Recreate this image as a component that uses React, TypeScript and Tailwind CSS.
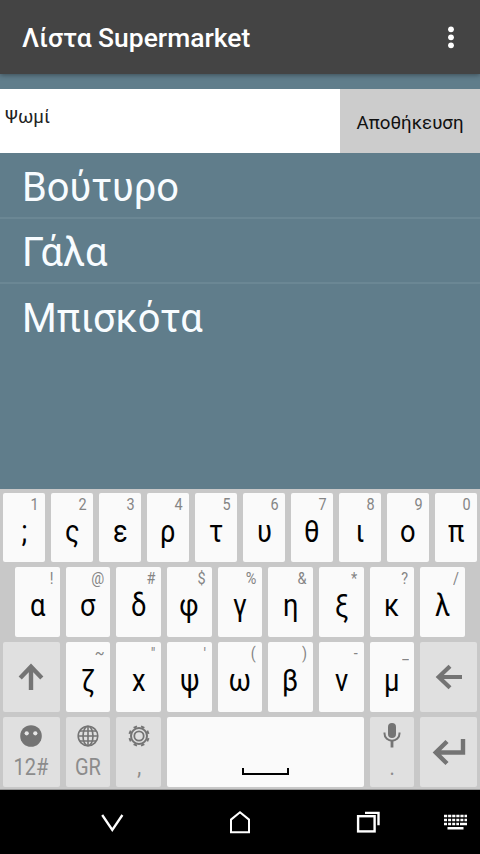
import type { ReactNode } from 'react';

type KeyDef = [label: string, hint: string];

const ROW_ONE: KeyDef[] = [
  [';', '1'], ['ς', '2'], ['ε', '3'], ['ρ', '4'], ['τ', '5'],
  ['υ', '6'], ['θ', '7'], ['ι', '8'], ['ο', '9'], ['π', '0'],
];
const ROW_TWO: KeyDef[] = [
  ['α', '!'], ['σ', '@'], ['δ', '#'], ['φ', '$'], ['γ', '%'],
  ['η', '&'], ['ξ', '*'], ['κ', '?'], ['λ', '/'],
];
const ROW_THREE: KeyDef[] = [
  ['ζ', '~'], ['x', '"'], ['ψ', "'"], ['ω', '('], ['β', ')'], ['ν', '-'], ['μ', '_'],
];

function LetterKey({ label, hint }: { label: string; hint: string }) {
  return (
    <div className="flex h-full min-w-0 flex-1 flex-col rounded-[2px] bg-[#fafafa]">
      <div className="h-[22px] pr-[6px] text-right text-[17px] leading-[22px] text-[#858585]">
        <span className="inline-block origin-right scale-x-[0.85]">{hint}</span>
      </div>
      <div className="text-center text-[31px] leading-[33px] text-black">
        <span className="inline-block scale-x-[0.88]">{label}</span>
      </div>
    </div>
  );
}

function FunctionKey({ className, children }: { className: string; children: ReactNode }) {
  return (
    <div className={`flex h-full shrink-0 flex-col items-center rounded-[2px] bg-[#e0e0e0] text-[#747474] ${className}`}>
      {children}
    </div>
  );
}

function Caption({ children }: { children: ReactNode }) {
  return (
    <div className="mt-[6px] text-[23px] leading-[28px] text-[#8c8c8c]">
      <span className="inline-block scale-x-[0.87]">{children}</span>
    </div>
  );
}

function Gear() {
  return (
    <svg className="h-[24px] w-[24px]" viewBox="-12 -12 24 24" fill="none" stroke="currentColor">
      <circle r="8" strokeWidth="2" />
      <circle r="4.7" strokeWidth="1.8" />
      {[22.5, 67.5, 112.5, 157.5, 202.5, 247.5, 292.5, 337.5].map((angle) => (
        <path key={angle} d="M-1.8 -9.6H1.8" strokeWidth="2" transform={`rotate(${angle})`} />
      ))}
    </svg>
  );
}

export default function App() {
  return (
    <div className="flex h-[854px] w-[480px] flex-col overflow-hidden bg-[#607d8b] font-['Roboto','Noto_Sans',sans-serif]">
      <header className="z-10 flex h-[74px] shrink-0 items-center justify-between bg-[#444444] pr-[26px] pl-[22px] shadow-[0_1px_5px_rgba(0,0,0,0.4)]">
        <h1 className="pt-[2px] text-[26px] leading-[32px] font-medium text-white">
          <span className="inline-block origin-left scale-x-[1.016]">Λίστα Supermarket</span>
        </h1>
        <svg className="h-[24px] w-[6px]" viewBox="0 0 6 24" fill="white">
          <circle cx="3" cy="4.3" r="2.9" />
          <circle cx="3" cy="12.3" r="2.9" />
          <circle cx="3" cy="20.3" r="2.9" />
        </svg>
      </header>

      <main className="flex min-h-0 flex-1 flex-col pt-[15.4px]">
        <div className="flex h-[64px] shrink-0">
          <div className="flex-1 bg-white pt-[17px] pl-[5px] text-[18.7px] leading-[22px] text-[#222]">Ψωμί</div>
          <div className="flex w-[140px] items-center justify-center bg-[#cccccc] pt-[3px] text-[18.7px] text-[#111]">Αποθήκευση</div>
        </div>
        <ul className="text-[39.8px] leading-[64px] text-[#f8fcff]">
          <li className="h-[66px] border-b-2 border-[#6b8794] pt-[3px] pl-[22px]">Βούτυρο</li>
          <li className="h-[65px] border-b-2 border-[#6b8794] pt-[2px] pl-[22px]">Γάλα</li>
          <li className="h-[65px] pt-[3px] pl-[22px]">Μπισκότα</li>
        </ul>
      </main>

      <section className="flex h-[301px] shrink-0 flex-col gap-[5px] border-b border-[#999] bg-[#c8c8c8] pt-[3.5px]">
        <div className="flex h-[69.8px] gap-[6px] px-[3px]">
          {ROW_ONE.map(([label, hint]) => <LetterKey key={label} label={label} hint={hint} />)}
        </div>
        <div className="flex h-[69.8px] gap-[6px] px-[15px]">
          {ROW_TWO.map(([label, hint]) => <LetterKey key={label} label={label} hint={hint} />)}
        </div>
        <div className="flex h-[69.8px] gap-[6px] px-[3px]">
          <FunctionKey className="w-[56.8px] justify-center">
            <svg className="h-[28px] w-[26px]" viewBox="0 0 26 28" fill="none" stroke="currentColor" strokeWidth="4.4">
              <path d="M13 27V3M2.2 15L13 3.7L23.8 15" />
            </svg>
          </FunctionKey>
          {ROW_THREE.map(([label, hint]) => <LetterKey key={label} label={label} hint={hint} />)}
          <FunctionKey className="w-[56.8px] justify-center">
            <svg className="h-[26px] w-[28px]" viewBox="0 0 28 26" fill="none" stroke="currentColor" strokeWidth="4.2">
              <path d="M27 13H3M15 2.2L3.7 13L15 23.8" />
            </svg>
          </FunctionKey>
        </div>
        <div className="flex h-[69.8px] gap-[6px] px-[3px]">
          <FunctionKey className="w-[56.8px] pt-[7px]">
            <svg className="h-[24px] w-[24px]" viewBox="0 0 24 24">
              <circle cx="12" cy="12" r="10.8" fill="currentColor" />
              <circle cx="7.7" cy="9.3" r="2.1" fill="#e8e8e8" />
              <circle cx="16.3" cy="9.3" r="2.1" fill="#e8e8e8" />
            </svg>
            <Caption>12#</Caption>
          </FunctionKey>
          <FunctionKey className="w-[44.7px] pt-[7px]">
            <svg className="h-[24px] w-[24px]" viewBox="0 0 24 24" fill="none" stroke="currentColor" strokeWidth="1.6">
              <circle cx="12" cy="12" r="9.8" />
              <ellipse cx="12" cy="12" rx="5" ry="9.8" />
              <path d="M12 2V22M2 12H22M4 7H20M4 17H20" />
            </svg>
            <Caption>GR</Caption>
          </FunctionKey>
          <FunctionKey className="w-[44.7px] pt-[7px]">
            <Gear />
            <Caption>,</Caption>
          </FunctionKey>
          <div className="flex h-full flex-1 items-end justify-center rounded-[2px] bg-[#fafafa] pb-[12px]">
            <div className="h-[7px] w-[47px] border-x-[2.4px] border-b-[2.4px] border-black" />
          </div>
          <FunctionKey className="w-[44.7px] pt-[5px]">
            <svg className="h-[26px] w-[18px]" viewBox="0 0 18 26" fill="none" stroke="currentColor" strokeWidth="2">
              <rect x="5" y="1" width="8" height="15" rx="4" fill="currentColor" stroke="none" />
              <path d="M1.5 10.5V11.5C1.5 21 16.5 21 16.5 11.5V10.5" />
              <path d="M9 18V25.5" strokeWidth="2.8" />
            </svg>
            <Caption>.</Caption>
          </FunctionKey>
          <FunctionKey className="w-[56.8px] justify-center">
            <svg className="h-[28px] w-[34px]" viewBox="0 0 34 28" fill="none" stroke="currentColor" strokeWidth="4.4">
              <path d="M31 1V14.5H4M15 3.5L3.8 14.5L15 25.5" />
            </svg>
          </FunctionKey>
        </div>
      </section>

      <nav className="flex h-[64px] shrink-0 items-center bg-black pr-[12px] pl-[101px]">
        <svg className="h-[22px] w-[23px]" viewBox="0 0 23 22" fill="none" stroke="white" strokeWidth="2.3">
          <path d="M1.2 4L11.3 19L21.4 4" />
        </svg>
        <svg className="ml-[105px] h-[24px] w-[22px]" viewBox="0 0 22 24" fill="none" stroke="white" strokeWidth="2">
          <path d="M2 22.3V9.6L11 2.3L20 9.6V22.3Z" />
        </svg>
        <svg className="ml-[105px] h-[24px] w-[24px]" viewBox="0 0 24 24" fill="none" stroke="white" strokeWidth="2.4">
          <rect x="2.1" y="6.2" width="16.5" height="15.2" />
          <path d="M9 2.9H22.5V15.2" />
        </svg>
        <svg className="ml-auto h-[18px] w-[25px]" viewBox="0 0 25 18" stroke="white" strokeWidth="2.6">
          <path d="M1 3H24" strokeDasharray="3.2 .9" />
          <path d="M1 7H24" strokeDasharray="3 1.1" />
          <path d="M1 11H16" strokeDasharray="3 1.1" />
          <path d="M17 11H24M4.5 15.2H20.5" />
        </svg>
      </nav>
    </div>
  );
}
